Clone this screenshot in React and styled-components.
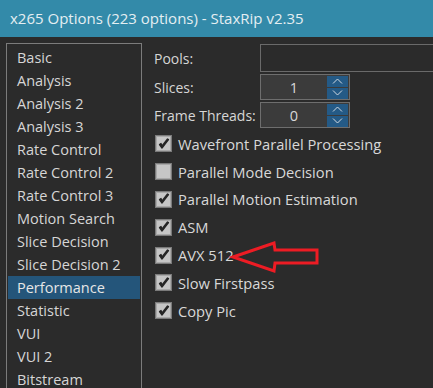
import React from 'react'
import styled, { createGlobalStyle } from 'styled-components'

const GlobalStyle = createGlobalStyle`
  html, body {
    margin: 0;
    padding: 0;
    background: #2b2b2b;
  }
  body {
    font-family: "Open Sans", "Noto Sans", sans-serif;
  }
`

const pages = [
    'Basic', 'Analysis', 'Analysis 2', 'Analysis 3', 'Rate Control',
    'Rate Control 2', 'Rate Control 3', 'Motion Search', 'Slice Decision',
    'Slice Decision 2', 'Performance', 'Statistic', 'VUI', 'VUI 2', 'Bitstream',
]

const options = [
    { label: 'Wavefront Parallel Processing', checked: true },
    { label: 'Parallel Mode Decision', checked: false },
    { label: 'Parallel Motion Estimation', checked: true },
    { label: 'ASM', checked: true },
    { label: 'AVX 512', checked: true },
    { label: 'Slow Firstpass', checked: true },
    { label: 'Copy Pic', checked: true },
]

function Spin({ value }) {
    return (
        <SpinBox>
            <span>{value}</span>
            <SpinButtons>
                <SpinButton>
                    <svg width="11" height="6" viewBox="0 0 11 6">
                        <path d="M1 5.5 L5.5 1 L10 5.5" fill="none" stroke="#d0d8e0" strokeWidth="1" />
                    </svg>
                </SpinButton>
                <SpinButton>
                    <svg width="11" height="6" viewBox="0 0 11 6">
                        <path d="M1 0.5 L5.5 5 L10 0.5" fill="none" stroke="#d0d8e0" strokeWidth="1" />
                    </svg>
                </SpinButton>
            </SpinButtons>
        </SpinBox>
    )
}

function Check({ checked }) {
    return (
        <Box>
            {checked && (
                <svg width="12" height="12" viewBox="0 0 12 12">
                    <path d="M1.5 6.5 L4 10 L10.5 1.5 L9.5 1 L4 8 L3 5.5 Z" fill="#262626" stroke="#262626" strokeWidth="1.3" strokeLinejoin="round" />
                </svg>
            )}
        </Box>
    )
}

export default function App() {
    return (
        <Window>
            <GlobalStyle />
            <TitleBar>x265 Options (223 options) - StaxRip v2.35</TitleBar>
            <Body>
                <PageList>
                    {pages.map((p) => (
                        <PageItem key={p} selected={p === 'Performance'}>{p}</PageItem>
                    ))}
                </PageList>
                <Panel>
                    <FormGrid>
                        <Label>Pools:</Label>
                        <TextBox />
                        <Label>Slices:</Label>
                        <Spin value="1" />
                        <Label>Frame Threads:</Label>
                        <Spin value="0" />
                    </FormGrid>
                    <CheckList>
                        {options.map((o) => (
                            <CheckRow key={o.label}>
                                <Check checked={o.checked} />
                                <span>{o.label}</span>
                            </CheckRow>
                        ))}
                    </CheckList>
                </Panel>
            </Body>
            {/* red paint arrow pointing at AVX 512 */}
            <Arrow width="433" height="388" viewBox="0 0 433 388">
                <path
                    d="M233 257 L274 243 L275 250 L317 250 L317 263 L275 263 L274 271 Z"
                    fill="none"
                    stroke="#ed1c24"
                    strokeWidth="3"
                    strokeLinejoin="miter"
                />
            </Arrow>
        </Window>
    )
}

const Window = styled.div`
    position: relative;
    width: 433px;
    height: 388px;
    overflow: hidden;
    background: #2b2b2b;
    display: flex;
    flex-direction: column;
`
const TitleBar = styled.div`
    height: 37px;
    flex-shrink: 0;
    background: #338aa9;
    color: #e4eef2;
    font-size: 15px;
    line-height: 37px;
    padding-left: 10px;
`
const Body = styled.div`
    flex: 1;
    display: flex;
    padding: 6px 0 0 6px;
    min-height: 0;
`
const PageList = styled.div`
    width: 132px;
    flex-shrink: 0;
    border: 1px solid #7c7c7c;
    border-bottom: none;
    padding: 2px 1px 0 1px;
    box-sizing: content-box;
    display: flex;
    flex-direction: column;
`
const PageItem = styled.div`
    height: 23px;
    line-height: 23px;
    padding-left: 9px;
    font-size: 14.5px;
    color: ${(p) => (p.selected ? '#e6e6e6' : '#d6d6d6')};
    background: ${(p) => (p.selected ? '#24557a' : 'transparent')};
    white-space: nowrap;
`
const Panel = styled.div`
    flex: 1;
    padding: 1px 0 0 12px;
    overflow: hidden;
`
const FormGrid = styled.div`
    display: grid;
    grid-template-columns: 106px 200px;
    grid-template-rows: 28px 26px 26px;
    row-gap: 2px;
    align-items: center;
`
const Label = styled.div`
    color: #d6d6d6;
    font-size: 14px;
    white-space: nowrap;
`
const TextBox = styled.div`
    height: 28px;
    box-sizing: border-box;
    border: 1px solid #6a6a6a;
    background: #2b2b2b;
`
const SpinBox = styled.div`
    width: 90px;
    height: 26px;
    box-sizing: border-box;
    border: 1px solid #6e6e6e;
    background: #3b3b3b;
    display: flex;
    align-items: center;
    color: #d8d8d8;
    font-size: 14.5px;
    span {
        flex: 1;
        text-align: center;
    }
`
const SpinButtons = styled.div`
    display: flex;
    flex-direction: column;
    gap: 1px;
    margin-right: 1px;
`
const SpinButton = styled.div`
    width: 21px;
    height: 11px;
    background: #245a86;
    display: flex;
    align-items: center;
    justify-content: center;
`
const CheckList = styled.div`
    margin-top: 2px;
    display: flex;
    flex-direction: column;
    padding-left: 1px;
`
const CheckRow = styled.div`
    height: 27.8px;
    display: flex;
    align-items: center;
    gap: 6px;
    color: #d8d8d8;
    font-size: 14.7px;
    white-space: nowrap;
`
const Box = styled.div`
    width: 17px;
    height: 17px;
    box-sizing: border-box;
    border: 1px solid #7a7a7a;
    background: #c6c6c6;
    box-shadow: inset 0 0 0 1px #a8a8a8;
    display: flex;
    align-items: center;
    justify-content: center;
    flex-shrink: 0;
`
const Arrow = styled.svg`
    position: absolute;
    left: 0;
    top: 0;
    pointer-events: none;
`
